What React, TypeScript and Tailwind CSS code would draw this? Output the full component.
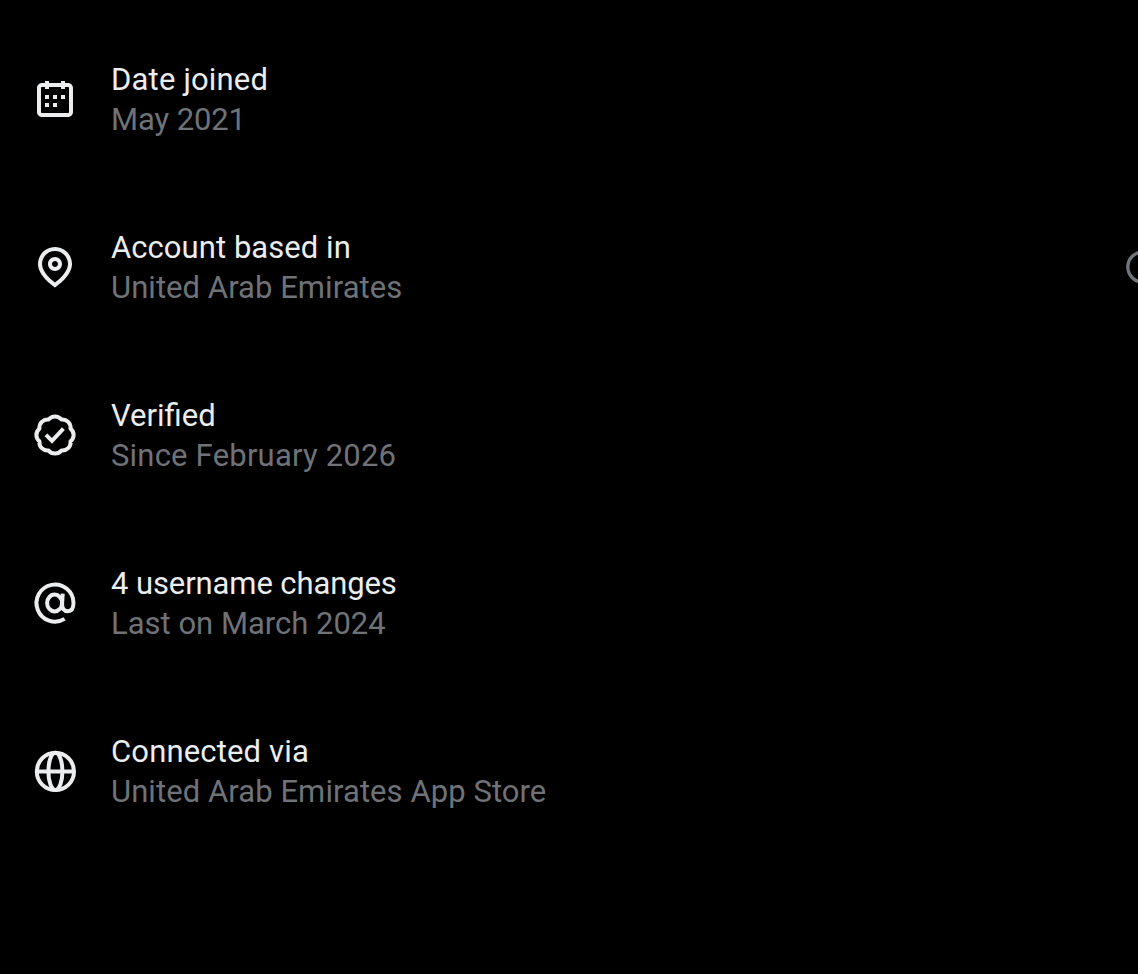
import React from 'react';

interface InfoRow {
  title: string;
  detail: string;
  titleClass: string;
  detailClass: string;
  icon: React.ReactNode;
  hasInfo?: boolean;
}

const Icon = ({ children }: { children: React.ReactNode }) => (
  <svg viewBox="0 0 24 24" className="mb-0.5 size-12 shrink-0 text-[#ebedee]" fill="none">
    {children}
  </svg>
);

const rows: InfoRow[] = [
  {
    title: 'Date joined',
    detail: 'May 2021',
    titleClass: 'tracking-[0.18px]',
    detailClass: 'tracking-[-0.1px]',
    icon: (
      <Icon>
        <path
          fill="currentColor"
          d="M7 4V3h2v1h6V3h2v1h1.5C19.89 4 21 5.12 21 6.5v12c0 1.38-1.11 2.5-2.5 2.5h-13C4.12 21 3 19.88 3 18.5v-12C3 5.12 4.12 4 5.5 4H7zm0 2H5.5c-.27 0-.5.22-.5.5v12c0 .28.23.5.5.5h13c.28 0 .5-.22.5-.5v-12c0-.28-.22-.5-.5-.5H17v1h-2V6H9v1H7V6zm0 6h2v-2H7v2zm0 4h2v-2H7v2zm4-4h2v-2h-2v2zm0 4h2v-2h-2v2zm4-4h2v-2h-2v2z"
        />
      </Icon>
    ),
  },
  {
    title: 'Account based in',
    detail: 'United Arab Emirates',
    titleClass: 'tracking-[0.06px]',
    detailClass: 'tracking-[0.05px]',
    hasInfo: true,
    icon: (
      <Icon>
        <path
          fill="currentColor"
          d="M12 7c-1.93 0-3.5 1.57-3.5 3.5S10.07 14 12 14s3.5-1.57 3.5-3.5S13.93 7 12 7zm0 5c-.827 0-1.5-.673-1.5-1.5S11.173 9 12 9s1.5.673 1.5 1.5S12.827 12 12 12zm0-10c-4.687 0-8.5 3.813-8.5 8.5 0 5.967 7.621 11.116 7.945 11.332l.555.37.555-.37c.324-.216 7.945-5.365 7.945-11.332C20.5 5.813 16.687 2 12 2zm0 17.77c-1.665-1.241-6.5-5.196-6.5-9.27C5.5 6.916 8.416 4 12 4s6.5 2.916 6.5 6.5c0 4.073-4.835 8.028-6.5 9.27z"
        />
      </Icon>
    ),
  },
  {
    title: 'Verified',
    detail: 'Since February 2026',
    titleClass: 'tracking-normal',
    detailClass: 'tracking-[0.2px]',
    icon: (
      <Icon>
        <g stroke="currentColor" strokeWidth="2">
          <path
            strokeLinejoin="round"
            d="M8.79 4.24a4.1 4.1 0 0 1 6.42 0a4.1 4.1 0 0 1 4.55 4.55a4.1 4.1 0 0 1 0 6.42a4.1 4.1 0 0 1-4.55 4.55a4.1 4.1 0 0 1-6.42 0a4.1 4.1 0 0 1-4.55-4.55a4.1 4.1 0 0 1 0-6.42a4.1 4.1 0 0 1 4.55-4.55z"
          />
          <path d="M7.5 11.9l3 3 5.7-6.1" />
        </g>
      </Icon>
    ),
  },
  {
    title: '4 username changes',
    detail: 'Last on March 2024',
    titleClass: 'tracking-[-0.1px]',
    detailClass: 'tracking-normal',
    icon: (
      <Icon>
        <g stroke="currentColor" strokeWidth="2">
          <ellipse cx="11.8" cy="12" rx="3.75" ry="4.2" />
          <path d="M16.8 19.95A9.25 9.25 0 1 1 21.25 12c0 2.6-1 4.1-2.9 4.1s-2.9-1.4-2.8-3.6l.3-5.2" />
        </g>
      </Icon>
    ),
  },
  {
    title: 'Connected via',
    detail: 'United Arab Emirates App Store',
    titleClass: 'tracking-[0.16px]',
    detailClass: 'tracking-[0.07px]',
    icon: (
      <Icon>
        <g stroke="currentColor" strokeWidth="2">
          <circle cx="12.2" cy="12.2" r="9.3" />
          <ellipse cx="12.2" cy="12.2" rx="3.5" ry="9.3" />
          <path d="M3 12.2h18.2" />
        </g>
      </Icon>
    ),
  },
];

const InfoIcon = () => (
  <svg viewBox="0 0 24 24" className="mb-0.5 size-10 shrink-0 text-[#71767b]" fill="none">
    <circle cx="12" cy="12" r="9.1" stroke="currentColor" strokeWidth="2" />
    <path d="M12 11v6M12 7v2" stroke="currentColor" strokeWidth="2" />
  </svg>
);

const App = () => {
  return (
    <main className="h-[974px] w-full overflow-hidden bg-black pt-4 font-['Roboto',sans-serif]">
      <ul className="w-[1163px] pl-[31px]">
        {rows.map((row) => (
          <li key={row.title} className="flex h-42 items-center">
            {row.icon}
            <div className="ml-8 flex-1 text-[31px] leading-10 whitespace-nowrap">
              <p className="text-[#ebedee]">
                <span className={row.titleClass}>{row.title}</span>
              </p>
              <p className="text-[#6f7276]">
                <span className={row.detailClass}>{row.detail}</span>
              </p>
            </div>
            {row.hasInfo && <InfoIcon />}
          </li>
        ))}
      </ul>
    </main>
  );
};

export default App;
